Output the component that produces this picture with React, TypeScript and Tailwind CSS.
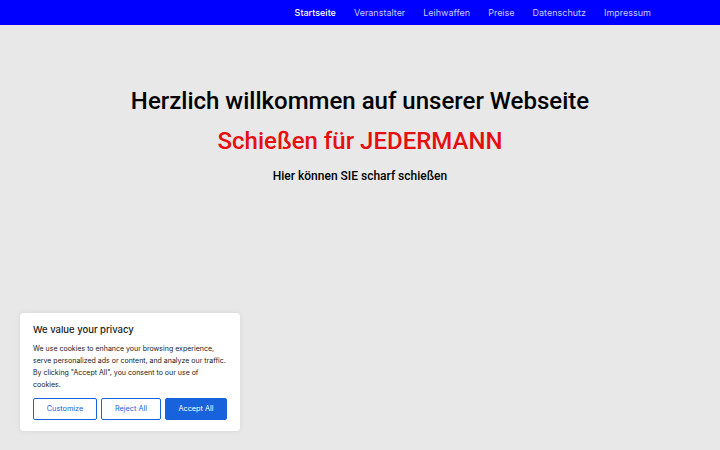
import React from 'react';

const navItems = ['Startseite', 'Veranstalter', 'Leihwaffen', 'Preise', 'Datenschutz', 'Impressum'];

export default function App() {
  return (
    <div className="min-h-[450px] w-full bg-[#e8e8e8] relative overflow-hidden" style={{ fontFamily: 'Inter, "Noto Sans", sans-serif' }}>
      {/* NAV */}
      <nav className="h-[25px] bg-[#0000ff] flex items-center justify-end pr-[69px]">
        <ul className="flex items-center gap-[18px] text-[9px]">
          {navItems.map((item, i) => (
            <li key={item} className={i === 0 ? 'text-white font-medium' : 'text-[#c9c9ff]'}>
              {item}
            </li>
          ))}
        </ul>
      </nav>

      {/* HERO */}
      <main className="flex flex-col items-center pt-[60px]" style={{ fontFamily: 'Roboto, "Liberation Sans", sans-serif' }}>
        <h1 className="text-[24px] leading-[32px] font-medium text-black">Herzlich willkommen auf unserer Webseite</h1>
        <h2 className="mt-[8px] text-[24px] leading-[32px] font-medium text-[#e50f0f]">Schießen für JEDERMANN</h2>
        <p className="mt-[10px] text-[12px] leading-[18px] font-medium text-black">Hier können SIE scharf schießen</p>
      </main>

      {/* COOKIE BANNER */}
      <div className="absolute left-[20px] top-[313px] w-[220px] bg-white rounded-[4px] shadow-[0_0_6px_rgba(0,0,0,0.08)] px-[13px] pt-[10px] pb-[11px]">
        <div className="text-[9.5px] font-medium text-[#212121] leading-[13px]">We value your privacy</div>
        <p className="mt-[7px] text-[7px] leading-[12px] text-[#212121]">
          We use cookies to enhance your browsing experience, serve personalized ads or content, and analyze our traffic. By clicking "Accept All", you consent to our use of cookies.
        </p>
        <div className="mt-[7px] flex gap-[4px]">
          <button className="w-[64px] h-[22px] border border-[#1863dc] rounded-[2px] text-[7.3px] text-[#1863dc]">Customize</button>
          <button className="w-[60px] h-[22px] border border-[#1863dc] rounded-[2px] text-[7.3px] text-[#1863dc]">Reject All</button>
          <button className="w-[62px] h-[22px] bg-[#1863dc] border border-[#1863dc] rounded-[2px] text-[7.3px] text-white">Accept All</button>
        </div>
      </div>
    </div>
  );
}
